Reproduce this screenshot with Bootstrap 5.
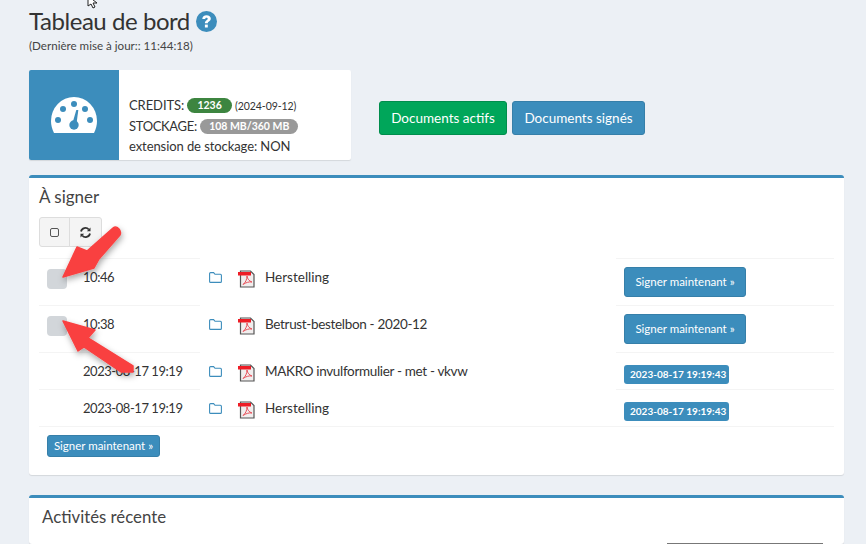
<!DOCTYPE html>
<html lang="fr">
<head>
<meta charset="utf-8">
<title>Tableau de bord</title>
<link href="https://cdn.jsdelivr.net/npm/bootstrap@5.3.0/dist/css/bootstrap.min.css" rel="stylesheet">
<style>
html,body{height:544px;overflow:hidden}
body{background:#ecf0f5;color:#333;font-family:"Lato","Liberation Sans",sans-serif;font-size:14px;line-height:20px;position:relative}
.pg{padding:8px 22px 0 29px}
.ttl{font-size:24px;line-height:26px;font-weight:400;margin:0;color:#333;display:flex;align-items:center;gap:6px;letter-spacing:-.45px}
.upd{font-size:11.6px;line-height:14px;margin-top:5px;color:#444}
.toprow{margin-top:17px;gap:28px}
.infob{width:322px;height:90px;background:#fff;border-radius:2px;box-shadow:0 1px 1px rgba(0,0,0,.1);overflow:hidden}
.infoic{width:90px;background:#3c8dbc}
.infotx{padding:25px 0 0 10px;line-height:20px;font-size:13px;letter-spacing:-.08px}
.infotx small{font-size:10.5px}
.pill{font-size:10.5px;line-height:11px;font-weight:700;padding:2px 10px;border-radius:10px;color:#fff;vertical-align:1px;letter-spacing:0}
.pg-green{background:#3d8540}
.pg-grey{background:#999;padding:2px 9px}
.btn-act{background:#00a65a;border:1px solid #008d4c;color:#fff;font-size:13.5px;line-height:20px;padding:6px 4px;border-radius:3px;width:128px;white-space:nowrap}
.btn-sig{background:#3c8dbc;border:1px solid #367fa9;color:#fff;font-size:13.5px;line-height:20px;padding:6px 4px;border-radius:3px;width:133px;white-space:nowrap}
.btn-act:hover,.btn-sig:hover,.btn-sm2:hover,.btn-xs2:hover{color:#fff}
.docbtns{gap:5px;margin-top:6px}
.bx{background:#fff;border:0;border-top:3px solid #3c8dbc;border-radius:3px;box-shadow:0 1px 1px rgba(0,0,0,.1);margin-top:15px}
.bx1{height:300px;padding:8px 10px 0}
.bx2{margin-top:20px;height:49px;padding:8px 13px 0;position:relative}
.bxt{font-size:17px;line-height:22px;font-weight:400;margin:0;color:#444}
.bx2 .bxt{font-size:16.8px}
.tb{margin-top:9px}
.tb .btn{background:#f4f4f4;border:1px solid #ddd;padding:0;height:30px;display:flex;align-items:center;justify-content:center;border-radius:3px}
.tb .b1{width:31px}
.tb .b2{width:33px}
.tbl{width:795px;table-layout:fixed;margin:11px 0 0 0;--bs-table-bg:transparent;border-collapse:collapse}
.tbl td{border:0;padding:7px 0 9px;vertical-align:top;color:#333;font-size:13.5px;line-height:22px;box-shadow:none}
.tbl .r2 td{padding:7px 0}
.tbl .ln{border-top:1px solid #f4f4f4}
.tbl .last td{border-bottom:1px solid #f4f4f4}
.r1 td{height:47px}
.r2 td{height:36px}
.c1{width:35px}.c2{width:126px}.c3{width:38px}.c4{width:378px}.c5{width:218px}
.cbx{display:block;width:20px;height:20px;background:#d2d6da;border-radius:4px;margin:3px 0 0 8px}
.tbl td.tm{padding-left:9px;font-size:13px;letter-spacing:-.45px}
.nm{display:flex;align-items:flex-start;gap:9px}
.nm svg{margin-top:4px;margin-bottom:-2px}
.tight{letter-spacing:-.33px}
.fold{margin:6px 0 0 9px;display:block}
.btn-sm2{background:#3c8dbc;border:1px solid #367fa9;color:#fff;font-size:11.5px;line-height:18px;padding:5px 4px;border-radius:3px;width:122px;white-space:nowrap;display:block;height:30px;margin:1px 0 -1px}
.dt{background:#3c8dbc;color:#fff;font-size:10px;line-height:13px;font-weight:700;padding:3px 6px;border-radius:3px;display:block;width:105px;white-space:nowrap;text-align:left;margin:5px 0 -4px}
.tbl td.cact{padding-left:8px}
.btn-xs2{background:#3c8dbc;border:1px solid #367fa9;color:#fff;font-size:11.5px;line-height:18px;padding:1px 2px;border-radius:3px;width:113px;white-space:nowrap;margin:8px 0 0 8px;display:block}
.rule{position:absolute;left:638px;top:45px;width:156px;height:1px;background:#777}
.arrows{position:absolute;left:0;top:0;pointer-events:none}
.cursor{position:absolute;left:87px;top:-4px}
</style>
</head>
<body>
<svg class="cursor" width="14" height="14" viewBox="0 0 14 14"><path d="M1 0v10l3-2 2 4 2-1-2-4h4z" fill="#fff" stroke="#222" stroke-width="1"/></svg>
<main class="pg">
  <h1 class="ttl">Tableau de bord
    <svg width="21" height="21" viewBox="0 0 21 21"><circle cx="10.5" cy="10.5" r="10.5" fill="#3c8dbc"/><path d="M6.300 8c0-2.300 1.800-3.800 4.300-3.800 2.400 0 4.200 1.400 4.200 3.400 0 2.900-3 2.800-3 4.700H8.900c0-3.200 2.800-3.100 2.800-4.600 0-.6-.5-1-1.200-1-.8 0-1.200.5-1.300 1.300z" fill="#fff"/><rect x="8.900" y="13.600" width="2.900" height="2.900" fill="#fff"/></svg>
  </h1>
  <div class="upd">(Dernière mise à jour:: 11:44:18)</div>
  <div class="d-flex align-items-center toprow">
    <div class="d-flex infob">
      <div class="infoic d-flex align-items-center justify-content-center">
        <svg width="46" height="37" viewBox="51 98 46 37"><path d="M51 122a23 24 0 0 1 46 0c0 4-1 8-3 12H54c-2-4-3-8-3-12z" fill="#fff"/><g fill="#3c8dbc"><circle cx="58" cy="121" r="3"/><circle cx="63" cy="110" r="3"/><circle cx="74" cy="105" r="3"/><circle cx="85" cy="110" r="3"/><circle cx="90" cy="121" r="3"/><circle cx="74" cy="126" r="4.700"/><path d="M72.500 124l3.800-13h2l-1.800 14z"/></g></svg>
      </div>
      <div class="infotx">
        <div>CREDITS: <span class="badge pill pg-green">1236</span> <small>(2024-09-12)</small></div>
        <div><span class="tight">STOCKAGE:</span> <span class="badge pill pg-grey">108 MB/360 MB</span></div>
        <div>extension de stockage: NON</div>
      </div>
    </div>
    <div class="d-flex docbtns">
      <a class="btn btn-act" href="#">Documents actifs</a>
      <a class="btn btn-sig" href="#">Documents signés</a>
    </div>
  </div>

  <section class="bx bx1">
    <h2 class="bxt">À signer</h2>
    <div class="btn-group tb">
      <button class="btn b1" type="button"><svg width="9" height="9" viewBox="0 0 9 9"><rect x=".5" y=".5" width="8" height="8" rx="1.500" fill="none" stroke="#555"/></svg></button>
      <button class="btn b2" type="button"><svg width="11" height="11" viewBox="0 0 11 11"><path d="M1 4.500A4.500 4.500 0 0 1 8.800 2.500" fill="none" stroke="#333" stroke-width="1.800"/><path d="M10.500 .6v3.600H6.900z" fill="#333"/><path d="M10 6.500A4.500 4.500 0 0 1 2.200 8.500" fill="none" stroke="#333" stroke-width="1.800"/><path d="M.5 10.400V6.800h3.600z" fill="#333"/></svg></button>
    </div>
    <table class="table tbl">
      <colgroup><col class="c1"><col class="c2"><col class="c3"><col class="c4"><col class="c5"></colgroup>
      <tbody>
        <tr class="r1">
          <td class="ln"><span class="cbx"></span></td><td class="ln tm">10:46</td>
          <td><svg class="fold" width="13" height="11" viewBox="0 0 13 11"><use href="#fo"/></svg></td>
          <td><div class="nm"><svg width="18" height="18" viewBox="0 0 18 18"><use href="#pd"/></svg>Herstelling</div></td>
          <td class="ln cact"><a class="btn btn-sm2" href="#">Signer maintenant »</a></td>
        </tr>
        <tr class="r1">
          <td class="ln"><span class="cbx"></span></td><td class="ln tm">10:38</td>
          <td><svg class="fold" width="13" height="11" viewBox="0 0 13 11"><use href="#fo"/></svg></td>
          <td><div class="nm tight"><svg width="18" height="18" viewBox="0 0 18 18"><use href="#pd"/></svg>Betrust-bestelbon - 2020-12</div></td>
          <td class="ln cact"><a class="btn btn-sm2" href="#">Signer maintenant »</a></td>
        </tr>
        <tr class="r2">
          <td class="ln"></td><td class="ln tm">2023-08-17 19:19</td>
          <td><svg class="fold" width="13" height="11" viewBox="0 0 13 11"><use href="#fo"/></svg></td>
          <td><div class="nm tight"><svg width="18" height="18" viewBox="0 0 18 18"><use href="#pd"/></svg>MAKRO invulformulier - met - vkvw</div></td>
          <td class="ln cact"><span class="dt">2023-08-17 19:19:43</span></td>
        </tr>
        <tr class="r2 last">
          <td class="ln"></td><td class="ln tm">2023-08-17 19:19</td>
          <td><svg class="fold" width="13" height="11" viewBox="0 0 13 11"><use href="#fo"/></svg></td>
          <td><div class="nm"><svg width="18" height="18" viewBox="0 0 18 18"><use href="#pd"/></svg>Herstelling</div></td>
          <td class="ln cact"><span class="dt">2023-08-17 19:19:43</span></td>
        </tr>
      </tbody>
    </table>
    <a class="btn btn-xs2" href="#">Signer maintenant »</a>
  </section>

  <section class="bx bx2">
    <h2 class="bxt">Activités récente</h2>
    <div class="rule"></div>
  </section>
</main>

<svg width="0" height="0" class="position-absolute">
  <defs>
    <g id="fo"><path d="M.6 9.400V1.600c0-.6.400-1 1-1h3l1.400 1.700h5.400c.6 0 1 .4 1 1v6.100c0 .6-.4 1-1 1H1.600c-.6 0-1-.4-1-1z" fill="none" stroke="#3c8dbc" stroke-width="1.100"/></g>
    <g id="pd"><path d="M2.500 1h10l3.500 3.500V17H2.500z" fill="#f1eeee" stroke="#555" stroke-width="1.200"/><rect x="0" y="2" width="13" height="3.500" fill="#ee1c25"/><path d="M5 14.500c2.500-2 4-5 4-8.500 .5 3 2 5 5 6-3-.5-6 .5-9 2.500z" fill="none" stroke="#e8505a" stroke-width="1"/></g>
    <filter id="shd" x="-30%" y="-30%" width="160%" height="160%"><feDropShadow dx="1" dy="3" stdDeviation="3" flood-color="#000" flood-opacity=".35"/></filter>
  </defs>
</svg>

<svg class="arrows" width="866" height="544" viewBox="0 0 866 544">
  <g fill="#f94040" filter="url(#shd)">
    <path d="M63 277L77 247 87 251 113 228C117 225 122 231 120 235L99 259 94 268z" stroke="#f94040" stroke-width="1.500" stroke-linejoin="round"/>
    <path d="M63 321L95 330 88 338 133 366 133 372 121 372 84 347 78 351z" stroke="#f94040" stroke-width="1.500" stroke-linejoin="round"/>
  </g>
</svg>
</body>
</html>
